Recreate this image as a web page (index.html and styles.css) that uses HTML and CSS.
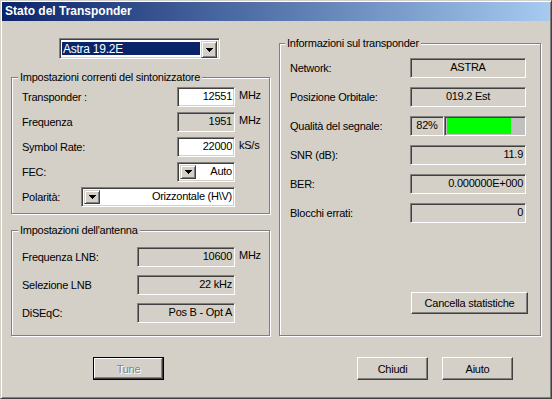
FILE: index.html
```html
<!DOCTYPE html>
<html>
<head>
    <title>Stato del Transponder</title>
    <meta charset="utf-8">
    <link rel="stylesheet" href="styles.css">
</head>
<body>
<div class="window">
    <div class="titlebar">Stato del Transponder</div>
    <div class="client">
        <div class="columns">
            <div class="col-left">
                <div class="combo sat-combo">
                    <span class="combo-text selected">Astra 19.2E</span>
                    <span class="drop"><svg width="7" height="4" viewBox="0 0 7 4"><path d="M0 0h7v1h-1v1h-1v1h-1v1h-1v-1h-1v-1h-1v-1h-1z"/></svg></span>
                </div>

                <div class="group tuner">
                    <span class="group-title">Impostazioni correnti del sintonizzatore</span>
                    <div class="row">
                        <span class="label">Transponder :</span>
                        <span class="field edit">12551</span>
                        <span class="unit">MHz</span>
                    </div>
                    <div class="row">
                        <span class="label">Frequenza</span>
                        <span class="field">1951</span>
                        <span class="unit">MHz</span>
                    </div>
                    <div class="row">
                        <span class="label">Symbol Rate:</span>
                        <span class="field edit">22000</span>
                        <span class="unit">kS/s</span>
                    </div>
                    <div class="row">
                        <span class="label">FEC:</span>
                        <span class="field combo">
                            <span class="drop"><svg width="7" height="4" viewBox="0 0 7 4"><path d="M0 0h7v1h-1v1h-1v1h-1v1h-1v-1h-1v-1h-1v-1h-1z"/></svg></span>
                            <span class="combo-text">Auto</span>
                        </span>
                        <span class="unit"></span>
                    </div>
                    <div class="row wide">
                        <span class="label">Polarità:</span>
                        <span class="field combo">
                            <span class="drop"><svg width="7" height="4" viewBox="0 0 7 4"><path d="M0 0h7v1h-1v1h-1v1h-1v1h-1v-1h-1v-1h-1v-1h-1z"/></svg></span>
                            <span class="combo-text">Orizzontale (H\V)</span>
                        </span>
                        <span class="unit"></span>
                    </div>
                </div>

                <div class="group antenna">
                    <span class="group-title">Impostazioni dell'antenna</span>
                    <div class="row">
                        <span class="label">Frequenza LNB:</span>
                        <span class="field">10600</span>
                        <span class="unit">MHz</span>
                    </div>
                    <div class="row">
                        <span class="label">Selezione LNB</span>
                        <span class="field">22 kHz</span>
                        <span class="unit"></span>
                    </div>
                    <div class="row">
                        <span class="label">DiSEqC:</span>
                        <span class="field">Pos B - Opt A</span>
                        <span class="unit"></span>
                    </div>
                </div>
            </div>

            <div class="group info">
                <span class="group-title">Informazioni sul transponder</span>
                <div class="row">
                    <span class="label">Network:</span>
                    <span class="field center">ASTRA</span>
                </div>
                <div class="row">
                    <span class="label">Posizione Orbitale:</span>
                    <span class="field center">019.2 Est</span>
                </div>
                <div class="row">
                    <span class="label">Qualità del segnale:</span>
                    <span class="field pct">82%</span>
                    <span class="progress"><span class="bar" style="width: 82%"></span></span>
                </div>
                <div class="row">
                    <span class="label">SNR (dB):</span>
                    <span class="field">11.9</span>
                </div>
                <div class="row">
                    <span class="label">BER:</span>
                    <span class="field">0.000000E+000</span>
                </div>
                <div class="row">
                    <span class="label">Blocchi errati:</span>
                    <span class="field">0</span>
                </div>
                <button class="btn reset">Cancella statistiche</button>
            </div>
        </div>

        <div class="footer">
            <button class="btn default tune" disabled>Tune</button>
            <button class="btn">Chiudi</button>
            <button class="btn">Aiuto</button>
        </div>
    </div>
</div>
</body>
</html>
```

FILE: styles.css
```css
* {
    box-sizing: border-box;
}

body {
    margin: 0;
    background-color: #d4d0c8;
    font-family: "Liberation Sans", Arial, sans-serif;
    font-size: 11px;
    letter-spacing: -0.25px;
    color: #000;
}

.window {
    width: 552px;
    height: 399px;
    padding: 1px;
    background-color: #d4d0c8;
    border: 1px solid;
    border-color: #d4d0c8 #404040 #404040 #d4d0c8;
    box-shadow: inset 1px 1px #fff, inset -1px -1px #808080;
}

.titlebar {
    height: 19px;
    padding-left: 3px;
    line-height: 19px;
    background: linear-gradient(to right, #0a246a, #a6caf0);
    color: #fff;
    font-size: 12px;
    font-weight: bold;
    letter-spacing: 0;
}

.columns {
    display: flex;
    gap: 9px;
    padding: 0 9px;
}

.col-left {
    width: 259px;
    display: flex;
    flex-direction: column;
}

/* group boxes */
.group {
    position: relative;
    display: flex;
    flex-direction: column;
    border: 1px solid #808080;
    box-shadow: 1px 1px 0 #fff, inset 1px 1px 0 #fff;
}

.group-title {
    position: absolute;
    top: -7px;
    left: 6px;
    padding: 0 2px;
    line-height: 13px;
    background-color: #d4d0c8;
}

.tuner {
    margin-top: 18px;
    height: 137px;
    padding: 9px 0 0 10px;
    gap: 5px;
}

.antenna {
    margin-top: 16px;
    height: 106px;
    padding: 16px 0 0 10px;
    gap: 8px;
}

.info {
    width: 262px;
    height: 293px;
    margin-top: 22px;
    padding: 14px 14px 0 10px;
    gap: 9px;
}

.info .group-title {
    left: 5px;
}

/* rows */
.row {
    display: flex;
    align-items: center;
    height: 20px;
}

.label {
    flex: 1;
    white-space: nowrap;
}

.unit {
    align-self: flex-start;
    width: 34px;
    padding-left: 4px;
    line-height: 16px;
}

.field {
    height: 20px;
    width: 58px;
    padding: 0 2px;
    line-height: 16px;
    text-align: right;
    white-space: nowrap;
    background-color: #d4d0c8;
    border: 1px solid;
    border-color: #808080 #fff #fff #808080;
    box-shadow: inset 1px 1px #404040, inset -1px -1px #d4d0c8;
}

.field.edit {
    background-color: #fff;
}

.antenna .field {
    width: 98px;
}

.info .field {
    width: 116px;
}

.info .field.center {
    text-align: center;
}

.info .field.pct {
    width: 34px;
    text-align: center;
}

.progress {
    width: 82px;
    height: 20px;
    padding: 1px;
    background-color: #c0c0c0;
    border: 1px solid;
    border-color: #808080 #fff #fff #808080;
    box-shadow: inset 1px 1px #404040;
}

.bar {
    display: block;
    height: 16px;
    margin-left: 1px;
    background-color: #00ff00;
}

/* combo boxes */
.combo {
    display: flex;
    align-items: stretch;
    padding: 0;
    background-color: #fff;
}

.combo .combo-text {
    flex: 1;
    padding-right: 2px;
    text-align: right;
}

.row.wide .label {
    flex: none;
    width: 59px;
}

.row.wide .field {
    flex: 1;
}

.sat-combo {
    width: 161px;
    height: 21px;
    margin: 17px 0 0 48px;
    padding: 2px;
    border: 1px solid;
    border-color: #808080 #fff #fff #808080;
    box-shadow: inset 1px 1px #404040, inset -1px -1px #d4d0c8;
}

.sat-combo .selected {
    margin: 1px 1px 1px 0;
    padding-left: 1px;
    line-height: 15px;
    text-align: left;
    background-color: #0a246a;
    color: #fff;
    font-size: 12px;
}

.drop {
    display: flex;
    align-items: center;
    justify-content: center;
    width: 16px;
    margin: 2px 0 2px 2px;
    background-color: #d4d0c8;
    border: 1px solid;
    border-color: #d4d0c8 #404040 #404040 #d4d0c8;
    box-shadow: inset 1px 1px #fff, inset -1px -1px #808080;
}

.sat-combo .drop {
    margin: 0;
    height: 17px;
}

/* buttons */
.btn {
    width: 71px;
    height: 23px;
    padding: 0;
    font-family: inherit;
    font-size: 11px;
    letter-spacing: -0.25px;
    color: #000;
    background-color: #d4d0c8;
    border: 1px solid;
    border-color: #fff #404040 #404040 #fff;
    box-shadow: inset -1px -1px #808080;
}

.btn.default {
    border: 1px solid #000;
    box-shadow: inset -1px -1px #404040, inset 1px 1px #fff, inset -2px -2px #808080;
}

.btn:disabled {
    color: #808080;
    text-shadow: 1px 1px 0 #fff;
}

.reset {
    width: 117px;
    height: 22px;
    margin-top: auto;
    margin-bottom: 21px;
    margin-right: -2px;
    align-self: flex-end;
}

.footer {
    display: flex;
    gap: 14px;
    margin-top: 21px;
    padding: 0 37px 0 91px;
}

.footer .tune {
    margin-right: auto;
}
```
